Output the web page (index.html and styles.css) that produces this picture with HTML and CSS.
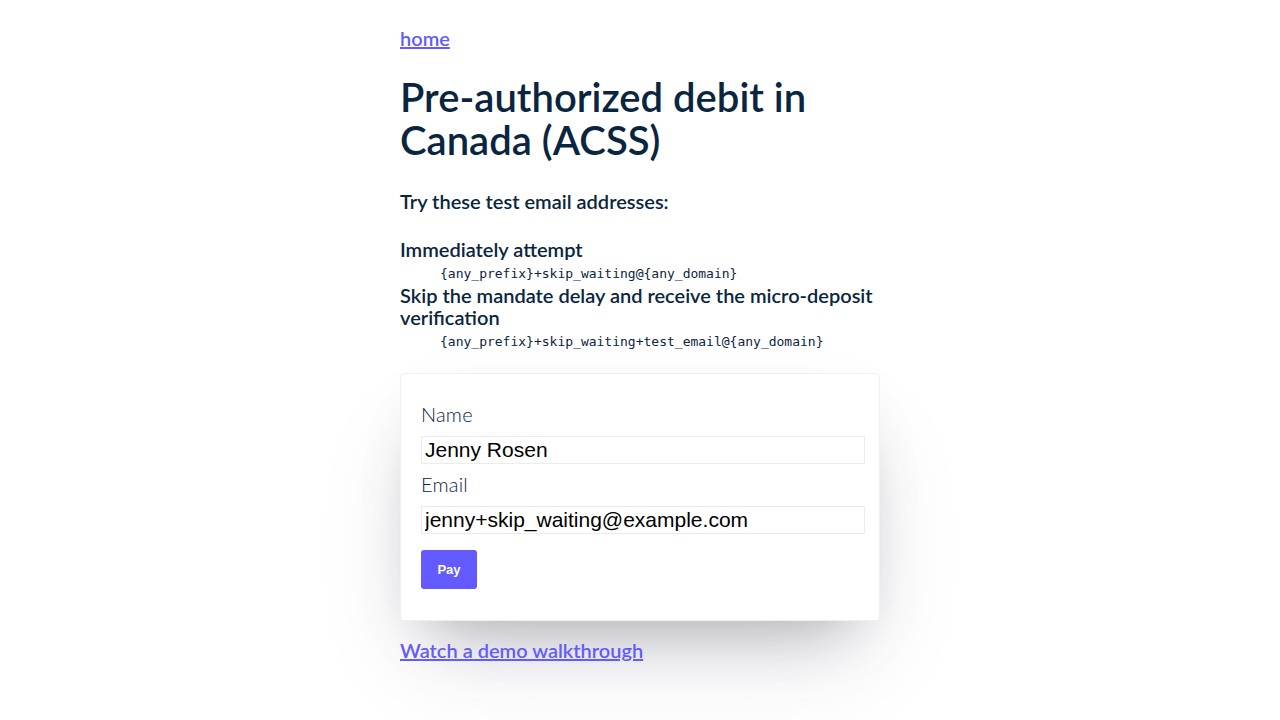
FILE: index.html
```html
<!DOCTYPE html>
<html lang="en">
<head>
<meta charset="utf-8">
<title>Pre-authorized debit in Canada (ACSS)</title>
<link rel="stylesheet" href="styles.css">
</head>
<body>
<main class="page">
  <a class="home-link" href="#">home</a>
  <h1 class="title">Pre-authorized debit in Canada (ACSS)</h1>
  <h3 class="subtitle">Try these test email addresses:</h3>
  <dl class="tests">
    <dt>Immediately attempt</dt>
    <dd><code>{any_prefix}+skip_waiting@{any_domain}</code></dd>
    <dt>Skip the mandate delay and receive the micro-deposit verification</dt>
    <dd><code>{any_prefix}+skip_waiting+test_email@{any_domain}</code></dd>
  </dl>
  <form class="card">
    <label class="field-label" for="name">Name</label>
    <input class="field-input" id="name" value="Jenny Rosen">
    <label class="field-label" for="email">Email</label>
    <input class="field-input" id="email" value="jenny+skip_waiting@example.com">
    <button class="pay-btn" type="button">Pay</button>
  </form>
  <a class="demo-link" href="#">Watch a demo walkthrough</a>
</main>
</body>
</html>
```
FILE: styles.css
```css
* { box-sizing: border-box; }
html, body {
  min-height: 100%;
}
body {
  margin: 0;
  min-height: 720px;
  background: #fff;
  font-family: "Lato", "Open Sans", sans-serif;
  color: #0a2540;
}
.page {
  width: 480px;
  margin: 0 auto;
  padding: 25px 0 60px;
  display: flex;
  flex-direction: column;
  align-items: flex-start;
}
.home-link, .demo-link {
  color: #635bff;
  font-size: 20px;
  font-weight: 600;
  line-height: 26px;
  text-decoration: underline;
}
.title {
  margin: 25px 0 0;
  font-size: 40px;
  line-height: 43px;
  font-weight: 600;
}
.subtitle {
  margin: 27px 0 0;
  font-size: 20px;
  line-height: 24px;
  font-weight: 600;
}
.tests {
  margin: 25px 0 0;
}
.tests dt {
  font-size: 20px;
  line-height: 22px;
  font-weight: 600;
}
.tests dd {
  margin: 0 0 0 40px;
  padding-top: 3px;
  font-family: "DejaVu Sans Mono", monospace;
  font-size: 13px;
  line-height: 21px;
}
.tests code {
  font-family: inherit;
  font-size: inherit;
}
.card {
  margin-top: 21px;
  width: 480px;
  padding: 27px 14px 31px 20px;
  border: 1px solid #f0f0f2;
  border-radius: 4px;
  background: #fff;
  box-shadow: 0 50px 100px -20px rgba(50, 50, 93, 0.15), 0 30px 60px -30px rgba(0, 0, 0, 0.3);
  display: flex;
  flex-direction: column;
  align-items: flex-start;
}
.field-label {
  font-size: 20px;
  font-weight: 300;
  letter-spacing: 0.2px;
  line-height: 26px;
  margin-bottom: 9px;
}
.field-input {
  width: 100%;
  height: 28px;
  margin: 0 0 7px;
  padding: 0 3px;
  border: 1px solid #ececec;
  font-family: "Liberation Sans", Arial, sans-serif;
  font-size: 21px;
  color: #000;
  background: #fff;
}
.pay-btn {
  margin-top: 9px;
  width: 56px;
  height: 39px;
  border: 0;
  border-radius: 3px;
  background: #635bff;
  color: #fff;
  font-family: "Liberation Sans", Arial, sans-serif;
  font-weight: 700;
  font-size: 13px;
}
.demo-link {
  margin-top: 16px;
}
```
